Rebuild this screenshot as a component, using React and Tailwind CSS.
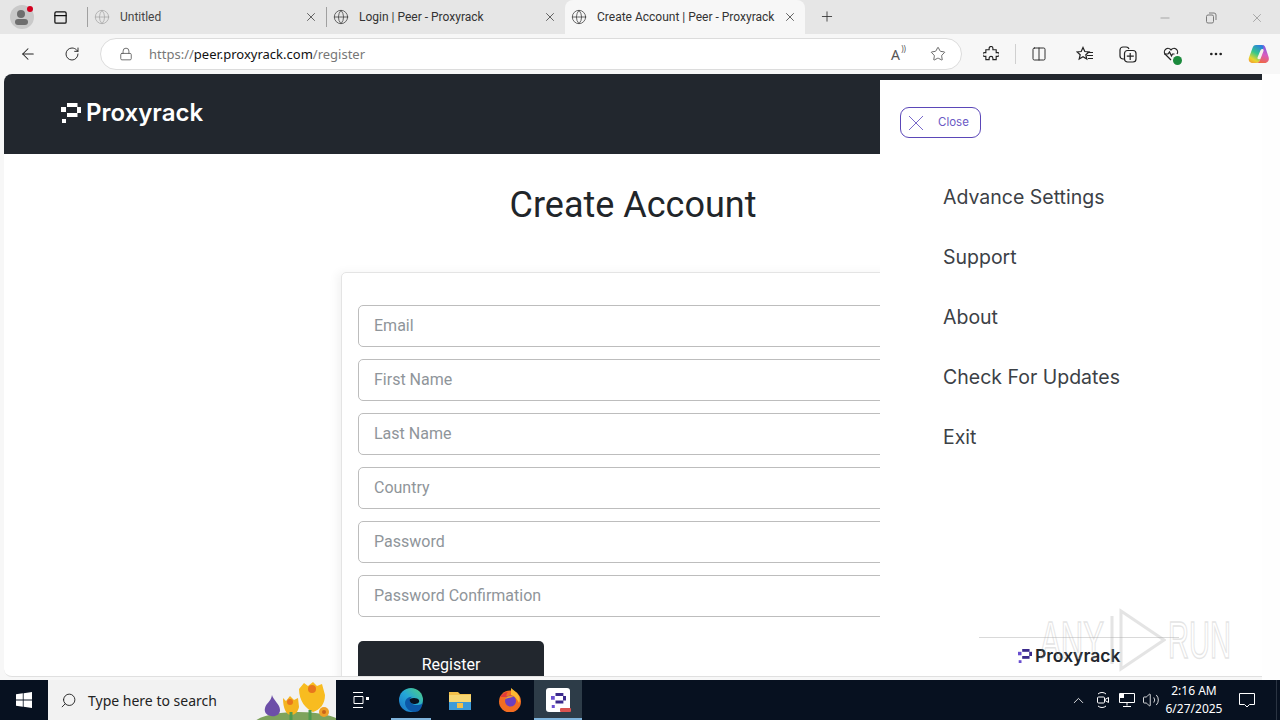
import React from 'react';
import { ArrowLeft, RotateCw, Lock, Star, Columns2, MoreHorizontal, Plus, X, Globe, Minus, ChevronUp, Volume2, Search, PanelTop } from 'lucide-react';

function ProxyLogo({ className, main = '#ffffff', accent = '#ffffff' }) {
    return (
        <svg viewBox="0 0 20 20" className={className}>
            <rect x="6" y="0" width="10.500" height="4" fill={main} />
            <rect x="16" y="4" width="4" height="6" fill={main} />
            <rect x="0" y="4" width="5" height="5" fill={accent} />
            <rect x="6" y="10" width="10.500" height="4" fill={main} />
            <rect x="1" y="16" width="4" height="4" fill={accent} />
        </svg>
    );
}

function Tab({ title, active, width, faded }) {
    return (
        <div
            className={
                'relative flex h-full shrink-0 items-center pl-[6px] pr-[8px] ' +
                width +
                (active ? ' rounded-t-lg bg-[#f7f7f7]' : '')
            }
        >
            <Globe className={'h-4 w-4 shrink-0 ' + (faded ? 'text-[#a8a8a8]' : 'text-[#444]')} strokeWidth={1.2} />
            <span className={"ml-[10px] flex-1 truncate font-['Roboto',sans-serif] text-[12px] " + (faded ? 'text-[#444]' : 'text-[#333]')}>{title}</span>
            <X className="h-[14px] w-[14px] shrink-0 text-[#444]" strokeWidth={1.4} />
        </div>
    );
}

function TabStrip() {
    return (
        <div className="flex h-[34px] shrink-0 items-end bg-[#e6e6e6] font-['Noto_Sans',sans-serif]">
            <div className="relative ml-[10px] mb-[5px] h-6 w-6 rounded-full bg-[#c9c9c9]">
                <div className="absolute left-[7px] top-[5px] h-2 w-2 rounded-full bg-[#6e6e6e]" />
                <div className="absolute left-[5px] top-[14px] h-[6px] w-[13px] rounded-full bg-[#6e6e6e]" />
                <div className="absolute right-[1px] top-[1px] h-[6px] w-[6px] rounded-full bg-[#d3001f]" />
            </div>
            <div className="ml-[18px] mb-[9px] flex h-4 w-4 items-center justify-center">
                <PanelTop className="h-[15px] w-[15px] text-[#111]" strokeWidth={2} />
            </div>
            <div className="ml-[19px] mb-[7px] h-5 w-px bg-[#a0a0a0]" />
            <Tab title="Untitled" width="w-[238px]" faded />
            <div className="mb-[7px] h-5 w-px bg-[#a0a0a0]" />
            <Tab title="Login | Peer - Proxyrack" width="w-[238px]" />
            <Tab title="Create Account | Peer - Proxyrack" width="w-[240px]" active />
            <div className="mb-[10px] ml-[14px] flex h-4 w-4 items-center justify-center">
                <Plus className="h-[17px] w-[17px] text-[#333]" strokeWidth={1.3} />
            </div>
            <div className="flex-1" />
            <div className="mb-[9px] mr-[16px] flex w-[106px] items-center justify-between text-[#7a7a7a]">
                <Minus className="h-[14px] w-[14px]" strokeWidth={1} />
                <svg viewBox="0 0 12 12" className="h-3 w-3" fill="none" stroke="currentColor">
                    <rect x="1.500" y="3" width="7" height="8" rx="1.500" />
                    <path d="M4 1h5a2 2 0 0 1 2 2v5" />
                </svg>
                <X className="h-[14px] w-[14px]" strokeWidth={1} />
            </div>
        </div>
    );
}

function Toolbar() {
    return (
        <div className="flex h-[40px] shrink-0 items-center bg-[#f7f7f7] font-['Noto_Sans',sans-serif]">
            <ArrowLeft className="ml-[19px] h-[18px] w-[18px] text-[#222]" strokeWidth={1.4} />
            <RotateCw className="ml-[27px] h-4 w-4 text-[#222]" strokeWidth={1.4} />
            <div className="ml-[20px] flex h-[32px] w-[862px] items-center rounded-full border border-[#dcdcdc] bg-white pl-[18px] pr-[15px]">
                <Lock className="h-[14px] w-[14px] text-[#555]" strokeWidth={1.4} />
                <span className="ml-[16px] flex-1 pt-[1px] text-[13px] text-[#777]">
                    https://<span className="text-[#111]">peer.proxyrack.com</span>/register
                </span>
                <span className="relative mr-[30px] text-[14px] text-[#555]">
                    A
                    <span className="absolute -right-[6px] -top-[1px] text-[8px]">))</span>
                </span>
                <Star className="h-4 w-4 text-[#555]" strokeWidth={1.3} />
            </div>
            {/* extensions */}
            <svg viewBox="0 0 16 16" className="ml-[21px] h-4 w-4" fill="none" stroke="#222" strokeWidth="1.200">
                <path d="M6 2.500a2 2 0 0 1 4 0V4h3.500v3H15a2 2 0 0 1 0 4h-1.500v3.500H10V13a2 2 0 0 0-4 0v1.500H2.500V11H1a2 2 0 0 1 0-4h1.500V4H6z" transform="translate(0.500 0) scale(0.94)" />
            </svg>
            <div className="ml-[16px] h-5 w-px bg-[#d0d0d0]" />
            <Columns2 className="ml-[15px] h-4 w-4 text-[#222]" strokeWidth={1.4} />
            {/* favorites */}
            <svg viewBox="0 0 18 16" className="ml-[29px] h-4 w-[18px]" fill="none" stroke="#222" strokeWidth="1.200">
                <path d="M7 1.500 8.800 5.500l4.200.4-3.200 2.800 1 4.300L7 10.800 3.200 13l1-4.300L1 5.900l4.200-.4z" />
                <path d="M11.500 6.500H17M11 9.500h6M12 12.500h5" />
            </svg>
            {/* collections */}
            <svg viewBox="0 0 18 18" className="ml-[25px] h-[18px] w-[18px]" fill="none" stroke="#222" strokeWidth="1.200">
                <path d="M5 14H4a3 3 0 0 1-3-3V5a3 3 0 0 1 3-3h3a3 3 0 0 1 3 2" />
                <rect x="5.500" y="5.500" width="11.500" height="11.500" rx="3" />
                <path d="M11.200 8v7M7.800 11.200h7" />
            </svg>
            <div className="relative ml-[26px] h-4 w-4">
                <svg viewBox="0 0 16 16" className="h-4 w-4" fill="none" stroke="#222" strokeWidth="1.200">
                    <path d="M8 14 2 8a3.400 3.400 0 0 1 6-4 3.400 3.400 0 0 1 6 4" />
                    <path d="M1 8h4l1.500-2 2 4 1-2h2" />
                </svg>
                <div className="absolute -bottom-[3px] -right-[3px] h-[9px] w-[9px] rounded-full bg-[#1c8a3d]" />
            </div>
            <MoreHorizontal className="ml-[29px] h-4 w-4 text-[#222]" strokeWidth={2} />
            <svg viewBox="0 0 22 22" className="ml-[24px] h-[22px] w-[22px]">
                <defs>
                    <linearGradient id="copA" x1="0.700" y1="0" x2="0.200" y2="1">
                        <stop offset="0" stopColor="#2a7fe0" />
                        <stop offset="0.450" stopColor="#35c78a" />
                        <stop offset="0.800" stopColor="#e8d52e" />
                        <stop offset="1" stopColor="#f4a02e" />
                    </linearGradient>
                    <linearGradient id="copB" x1="0.500" y1="0" x2="0.300" y2="1">
                        <stop offset="0" stopColor="#7d5ce0" />
                        <stop offset="0.500" stopColor="#d85cc0" />
                        <stop offset="1" stopColor="#f0683c" />
                    </linearGradient>
                </defs>
                <path d="M8 2h6c2 0 2.500 1 2 3l-4 12c-.6 2-2 3-4 3H5c-3.500 0-5-2.500-4-5.500L4.500 5C5.200 3 6 2 8 2z" fill="url(#copA)" />
                <path d="M14 2c2 0 3 1 3.600 3l3 9c1 3.500-1 6-4 6H8c2 0 3.400-1 4-3l3.200-11c.4-1.500.2-3-1.200-4z" fill="url(#copB)" />
                <path d="M14.500 6c1 0 1.300 1 1 2l-2.700 7c-.3 1-1 1.300-2 1.300-1.200 0-1.500-1-1.200-2l2.700-6.500C12.700 6.500 13.500 6 14.500 6z" fill="#f7f0ea" />
            </svg>
            <div className="flex-1" />
        </div>
    );
}

function Field({ placeholder }) {
    return (
        <div className="flex h-[42px] items-center rounded-[5px] border border-[#bdbdbd] bg-white px-[15px] text-[16px] text-[#8f959a]">
            {placeholder}
        </div>
    );
}

function MenuPanel() {
    const items = ['Advance Settings', 'Support', 'About', 'Check For Updates', 'Exit'];
    return (
        <div className="absolute bottom-0 left-[876px] top-[6px] flex w-[382px] flex-col bg-white font-['Inter',sans-serif]">
            <div className="ml-[20px] mt-[27px] flex h-[31px] w-[81px] items-center rounded-[9px] border border-[#5b47b8] pl-[7px] text-[11.500px] text-[#6a58c4]">
                <svg viewBox="0 0 16 16" className="h-4 w-4" fill="none" stroke="#6a58c4" strokeWidth="0.900">
                    <path d="M1 1l14 14M15 1 1 15" />
                </svg>
                <span className="ml-[14px]">Close</span>
            </div>
            <div className="ml-[63px] mt-[44px] flex flex-col gap-[30px]">
                {items.map((item) => (
                    <div key={item} className="h-[30px] text-[19.500px] leading-[30px] text-[#3c4146]">
                        {item}
                    </div>
                ))}
            </div>
            <div className="flex-1" />
            <div className="ml-[99px] h-px w-[200px] bg-[#d9d9d9]" />
            <div className="mb-[12px] ml-[138px] mt-[9px] flex items-center">
                <ProxyLogo className="h-[14px] w-[14px]" main="#3b2a8c" accent="#6a4fd0" />
                <span className="ml-[3px] text-[17.500px] font-semibold leading-[17px] text-[#22262c]">Proxyrack</span>
            </div>
        </div>
    );
}

function Watermark() {
    return (
        <div className="pointer-events-none absolute left-[1040px] top-[608px] flex items-center opacity-30">
            <span className="block w-[66px] origin-left scale-x-[0.6] whitespace-nowrap font-['Liberation_Sans',sans-serif] text-[52px] leading-[64px] text-transparent [-webkit-text-stroke:1.5px_#a8a8a8]">
                ANY
            </span>
            <svg viewBox="0 0 60 64" className="h-[64px] w-[60px]" fill="none" stroke="#a8a8a8" strokeWidth="3">
                <path d="M6 8v48" />
                <path d="M15 3 58 32 15 61z" />
            </svg>
            <span className="ml-[2px] block w-[64px] origin-left scale-x-[0.56] whitespace-nowrap font-['Liberation_Sans',sans-serif] text-[52px] leading-[64px] text-transparent [-webkit-text-stroke:1.5px_#a8a8a8]">
                RUN
            </span>
        </div>
    );
}

function Page() {
    const fields = ['Email', 'First Name', 'Last Name', 'Country', 'Password', 'Password Confirmation'];
    return (
        <div className="flex min-h-0 flex-1">
            <div className="flex min-w-0 flex-1 bg-[#f7f7f7] pb-[3px] pl-[4px]">
                <div className="relative flex-1 overflow-hidden rounded-l-lg border-b border-[#e0e0e0] bg-white font-['Roboto',sans-serif]">
                    <div className="flex h-[80px] items-center bg-[#22272e] pb-[2px] pl-[57px]">
                        <ProxyLogo className="h-5 w-5" />
                        <span className="ml-[5px] font-['Inter',sans-serif] text-[24px] font-semibold leading-none text-white">Proxyrack</span>
                    </div>
                    <h1 className="mt-[28px] text-center text-[36px] font-normal leading-[47px] text-[#212529]">Create Account</h1>
                    <div className="mx-auto mt-[43px] w-[584px] rounded-t-[5px] border border-[#e4e4e4] px-4 pt-[32px] shadow-[-4px_0_10px_rgba(0,0,0,0.05)]">
                        <div className="flex flex-col gap-3">
                            {fields.map((f) => (
                                <Field key={f} placeholder={f} />
                            ))}
                        </div>
                        <div className="mt-6 flex h-[46px] w-[186px] items-center justify-center rounded-[5px] bg-[#22272e] pt-[1px] text-[16px] font-normal text-white">
                            Register
                        </div>
                    </div>
                    <MenuPanel />
                </div>
            </div>
            <div className="w-[18px] shrink-0 bg-[#fefefe]" />
        </div>
    );
}

function Flowers() {
    return (
        <svg viewBox="0 0 84 40" className="h-[40px] w-[84px] shrink-0">
            <ellipse cx="46" cy="46" rx="46" ry="14" fill="#7ea35c" />
            <path d="M20 15c1 5 8 9 8 15 0 5-5 7-9 6-5-1-7-4-6-8 1-5 6-6 7-13z" fill="#6d4fa8" />
            <path d="M31 18l3 3 4-5 4 4 4-2 1 9c-1 5-4 8-8 8-5 0-8-7-8-17z" fill="#f4b41e" />
            <path d="M47 9l5-6 4 3 5-4 4 4 5-2 3 11c0 9-5 15-12 17-7-3-14-11-14-23z" fill="#f8bc20" />
            <circle cx="60" cy="9" r="4" fill="#e8761c" />
            <circle cx="38" cy="22" r="3" fill="#e8761c" />
            <circle cx="72" cy="32" r="5" fill="#efa128" />
            <circle cx="72" cy="32" r="2" fill="#c8641a" />
            <path d="M58 30v10M39 32v8" stroke="#4f9a4f" strokeWidth="3" />
        </svg>
    );
}

function TaskIcon({ width, underline, active, children }) {
    return (
        <div className={'relative flex h-full items-center justify-center ' + width + (active ? ' bg-[#2d3c48]' : '')}>
            {children}
            {underline && <div className={'absolute bottom-0 h-[2px] bg-[#7fb4dc] ' + underline} />}
        </div>
    );
}

function Taskbar() {
    return (
        <div className="flex h-[40px] shrink-0 items-center bg-[#071120] font-['Noto_Sans',sans-serif] text-white">
            <div className="flex h-full w-[48px] items-center justify-center">
                <svg viewBox="0 0 16 16" className="h-4 w-4" fill="#ffffff">
                    <path d="M0 2.300 6.800 1.300v6.300H0zM7.600 1.200 16 0v7.600H7.600zM0 8.400h6.800v6.300L0 13.700zM7.600 8.400H16V16l-8.400-1.200z" />
                </svg>
            </div>
            <div className="flex h-full w-[288px] items-center overflow-hidden bg-[#f2f2f2] pl-[12px] text-[#222]">
                <Search className="h-[17px] w-[17px] -scale-x-100" strokeWidth={1.3} />
                <span className="ml-[11px] flex-1 text-[14px]">Type here to search</span>
                <Flowers />
            </div>
            <TaskIcon width="w-[50px]">
                <svg viewBox="0 0 16 18" className="h-[18px] w-4" fill="none" stroke="#ffffff">
                    <path d="M0 1.500h10M0 16.500h10M1 5.500h9v7H1z" />
                    <rect x="13" y="6" width="3" height="3" fill="#ffffff" stroke="none" />
                </svg>
            </TaskIcon>
            <TaskIcon width="w-[49px]" underline="left-[5px] w-[40px]">
                <svg viewBox="0 0 24 24" className="h-6 w-6">
                    <defs>
                        <linearGradient id="edgeA" x1="1" y1="0" x2="0" y2="1">
                            <stop offset="0" stopColor="#52d17c" />
                            <stop offset="0.500" stopColor="#24a6d8" />
                            <stop offset="1" stopColor="#1a6fc4" />
                        </linearGradient>
                    </defs>
                    <circle cx="12" cy="12" r="12" fill="url(#edgeA)" />
                    <path d="M24 13c0 3-3 4-6 4-4 0-7-2-7-5 0-2 2-4 4-3-6-1-9 3-9 6 0 5 5 9 10 9 4 0 7-3 8-11z" fill="#0c58a8" />
                    <path d="M11 11c3-2 8-1 9 1 1 3-2 4-5 4-3 0-5-3-4-5z" fill="#071120" />
                </svg>
            </TaskIcon>
            <TaskIcon width="w-[50px]">
                <svg viewBox="0 0 22 20" className="h-5 w-[22px]">
                    <path d="M0 2h9l2 2h11v16H0z" fill="#f3c04a" />
                    <rect x="0" y="5" width="22" height="8" fill="#f7d774" />
                    <rect x="0" y="12" width="22" height="8" fill="#3d9bd9" />
                    <rect x="8" y="13" width="6" height="5" fill="#f3c04a" />
                </svg>
            </TaskIcon>
            <TaskIcon width="w-[49px]">
                <svg viewBox="0 0 24 24" className="h-6 w-6">
                    <circle cx="12" cy="13.500" r="11" fill="#f26d21" />
                    <path d="M13 0c2 2 6 4 8 8 1 3 1 5 0 7-2-4-4-7-8-8z" fill="#fbb830" />
                    <path d="M2 9c2-3 5-5 8-5-2 2-2 4-1 5z" fill="#e03a3c" />
                    <circle cx="12.500" cy="13" r="5.500" fill="#6b3fc0" />
                    <path d="M7 11c2-3 6-4 9-2-2 0-6 1-9 2z" fill="#f5a623" />
                </svg>
            </TaskIcon>
            <TaskIcon width="w-[48px]" active underline="left-0 w-[48px]">
                <div className="relative flex h-[24px] w-[24px] items-center justify-center rounded-[3px] bg-white">
                    <ProxyLogo className="h-[15px] w-[15px]" main="#3b2a8c" accent="#6a4fd0" />
                    <div className="absolute -right-[1px] bottom-0 h-[4px] w-[11px] rounded-[1px] bg-[#d9534f]" />
                </div>
            </TaskIcon>
            <div className="flex-1" />
            <ChevronUp className="h-[17px] w-[17px]" strokeWidth={1.2} />
            {/* meet now */}
            <svg viewBox="0 0 14 18" className="ml-[9px] h-[18px] w-[14px]" fill="none" stroke="#ffffff">
                <path d="M2 3a6 6 0 0 1 8 0M2 15a6 6 0 0 0 8 0" />
                <rect x="1.500" y="6" width="7" height="6" rx="1" />
                <path d="M9 8.500 12.500 6.500v5L9 9.500" />
            </svg>
            <svg viewBox="0 0 16 14" className="ml-[9px] h-[14px] w-4" fill="none" stroke="#ffffff">
                <path d="M.5.5h15v9H.5zM8 9.500v3M4 13.500h8" />
                <rect x="1" y="1" width="4" height="4" fill="#ffffff" stroke="none" />
            </svg>
            <Volume2 className="ml-[7px] h-[18px] w-[18px]" strokeWidth={1.1} />
            <div className="ml-[4px] flex w-[60px] flex-col items-center whitespace-nowrap text-[12px] leading-[18px]">
                <span>2:16 AM</span>
                <span>6/27/2025</span>
            </div>
            <svg viewBox="0 0 18 18" className="ml-[14px] mr-[20px] h-[18px] w-[18px]" fill="none" stroke="#ffffff">
                <path d="M1.500 2.500h15v11h-5L9 16l-2.500-2.500h-5z" />
            </svg>
            <div className="mr-[3px] h-full w-px bg-[#2a3442]" />
        </div>
    );
}

export default function App() {
    return (
        <div className="relative flex h-screen w-[1280px] flex-col overflow-hidden bg-white">
            <TabStrip />
            <Toolbar />
            <Page />
            <Taskbar />
            <Watermark />
        </div>
    );
}
